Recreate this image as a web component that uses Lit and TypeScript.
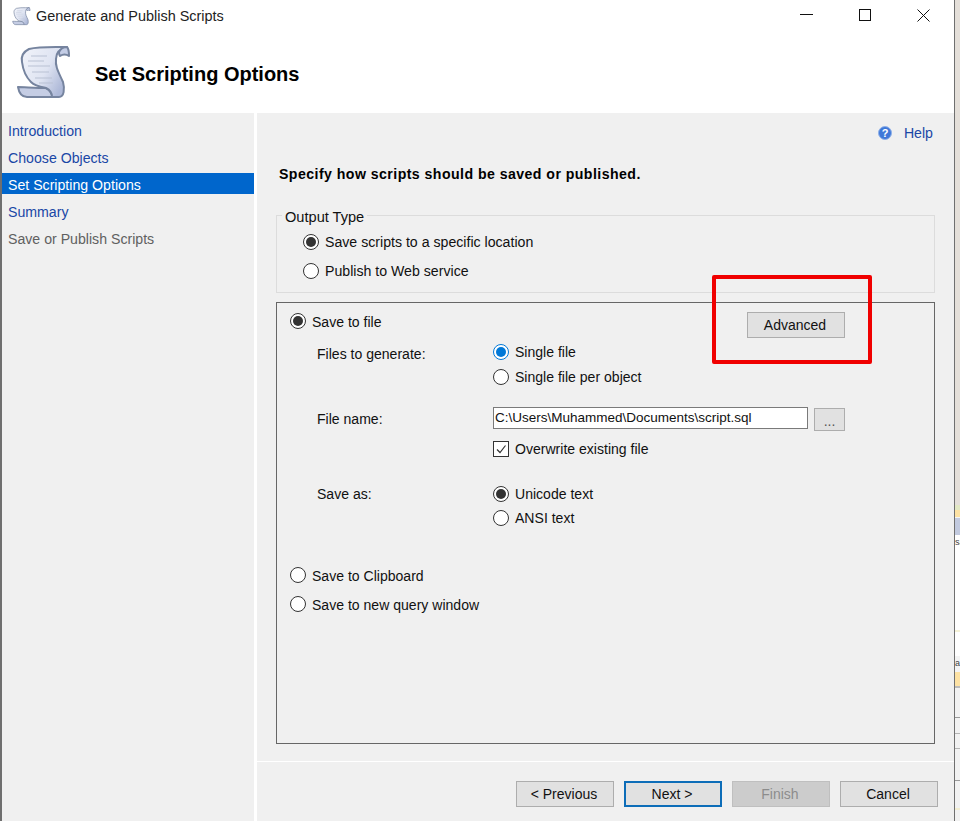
import { LitElement, css, html, svg } from "lit";
import { customElement } from "lit/decorators.js";

// background behind the dialog, top to bottom: height, colour, clipped text
const backdrop: [number, string, string?][] = [
  [505, "#e4dfd9"],
  [5, "#e2e8c4"],
  [7, "#fde2a4"],
  [1, "#f4f4f4"],
  [17, "#c2cadf"],
  [95, "#ffffff", "sa"],
  [2, "#f5f2d8"],
  [24, "#ffffff"],
  [16, "#f4f4f4", "a"],
  [14, "#fde2a4"],
  [2, "#bcbcbc"],
  [29, "#f2f2f2"],
  [1, "#9a9a9a"],
  [15, "#f2f2f2"],
  [1, "#b5b5b5"],
  [14, "#f2f2f2"],
  [1, "#b5b5b5"],
  [31, "#f2f2f2"],
  [1, "#9a9a9a"],
  [27, "#f2f2f2"],
  [2, "#f2eed2"],
  [11, "#f2f2f2"],
];

const scroll = (size: number) => html`
  <svg width=${size} height=${size} viewBox="0 0 54 56" aria-hidden="true">
    <defs>
      <linearGradient id="paper" x1="0" y1="0" x2="1" y2="0.6">
        <stop offset="0" stop-color="#f2f4fa"></stop>
        <stop offset="0.6" stop-color="#dfe4f2"></stop>
        <stop offset="1" stop-color="#aeb9d8"></stop>
      </linearGradient>
    </defs>
    ${svg`
      <path d="M1 42 C6 42 20 43 29 43 C33 45 35 48 35 52 L10 52 C5 52 2 48 1 42Z" fill="#c5cde4" stroke="#76849f" stroke-width="2" stroke-linejoin="round"/>
      <path d="M12 4 C6 7 4 12 5 17 C6 25 9 32 14 37 C18 41 24 42 29 43 C33 45 35 48 35 52 L42 52 C47 52 48 44 46 37 C42 28 38 22 39 14 C39 8 42 4 50 2 L39 2 C30 2 20 2 12 4Z" fill="url(#paper)" stroke="#76849f" stroke-width="2" stroke-linejoin="round"/>
      <path d="M42 7 C44 3 48 2 50 2 C52 4 52 8 52 11 C49 9 46 9 43 11 C42 10 42 8 42 7Z" fill="#c4cde6" stroke="#76849f" stroke-width="2" stroke-linejoin="round"/>
      <path d="M14 11H30M11 16H27M11 21H33M15 27H32M18 33H35M22 38H36" stroke="#b9c1d4" stroke-width="1.2" fill="none"/>
    `}
  </svg>
`;

const radio = (label: string, kind = "") => html`
  <div class="choice">
    <span class="radio ${kind}"></span><span>${label}</span>
  </div>
`;

@customElement("app-root")
export class AppRoot extends LitElement {
  static styles = css`
    :host {
      display: flex;
      width: 960px;
      height: 821px;
      overflow: hidden;
      font-family: "Liberation Sans", Arial, sans-serif;
      font-size: 14.15px;
      color: #111;
      background: #fff;
    }

    .window {
      width: 952px;
      height: 821px;
      flex: none;
      display: flex;
      flex-direction: column;
      border-left: 2px solid #6f6f6f;
      border-right: 1px solid #6f6f6f;
      background: #fff;
    }

    .strip {
      flex: 1;
      min-width: 0;
      overflow: hidden;
    }

    .strip div {
      font-size: 9px;
      line-height: 14px;
      color: #444;
      white-space: nowrap;
    }

    .head {
      height: 113px;
      flex: none;
      display: flex;
      flex-direction: column;
    }

    .titlebar {
      height: 32px;
      display: flex;
      align-items: center;
      font-size: 14.45px;
      color: #222;
      padding-left: 10px;
    }

    .titlebar .small {
      width: 19px;
      height: 19px;
      margin-right: 5px;
    }

    .controls {
      margin-left: auto;
      display: flex;
      gap: 46px;
      align-items: center;
      padding: 0 24px 2px 0;
    }

    .controls svg {
      display: block;
    }

    .banner {
      display: flex;
      align-items: center;
      padding-left: 14px;
      height: 56px;
      margin-top: 13px;
    }

    .banner h1 {
      margin: 2px 0 0 23px;
      font-size: 20px;
      font-weight: 700;
      color: #000;
    }

    .body {
      flex: 1;
      display: flex;
      min-height: 0;
    }

    nav {
      width: 252px;
      flex: none;
      background: #f0f0f0;
      padding-top: 6px;
      margin-right: 3px;
    }

    nav div {
      height: 21px;
      line-height: 24px;
      margin-bottom: 6px;
      padding-left: 6px;
      color: #1a47a6;
    }

    nav .current {
      background: #0066cc;
      color: #fff;
    }

    nav .off {
      color: #606060;
    }

    .side {
      flex: 1;
      display: flex;
      flex-direction: column;
      min-width: 0;
    }

    main {
      height: 648px;
      flex: none;
      background: #f0f0f0;
      padding: 10px 19px 0;
      box-sizing: border-box;
    }

    .help {
      height: 20px;
      display: flex;
      justify-content: flex-end;
      align-items: center;
      color: #1a47a6;
      padding-right: 2px;
    }

    .help svg {
      margin-right: 12px;
    }

    h2 {
      margin: 21px 0 0 3px;
      height: 20px;
      line-height: 20px;
      font-size: 14.15px;
      font-weight: 700;
      letter-spacing: 0.44px;
      white-space: nowrap;
      color: #000;
    }

    .group {
      position: relative;
      margin-top: 31px;
      height: 78px;
      box-sizing: border-box;
      border: 1px solid #dcdcdc;
      padding: 17px 0 0 26px;
    }

    .legend {
      position: absolute;
      left: 5px;
      top: -7px;
      padding: 0 3px;
      font-size: 14.6px;
      line-height: 16px;
      background: #f0f0f0;
    }

    .group .choice + .choice {
      margin-top: 11px;
    }

    .box {
      margin-top: 9px;
      height: 442px;
      box-sizing: border-box;
      border: 1px solid #666;
      padding: 9px 89px 0 13px;
      font-size: 14.05px;
    }

    .top {
      display: flex;
      justify-content: space-between;
      align-items: flex-start;
    }

    .top .choice span:last-child,
    .others .choice span:last-child {
      padding-top: 2px;
    }

    .form {
      margin: 5px 0 0 27px;
      display: grid;
      grid-template-columns: 176px 1fr;
    }

    .stack {
      display: flex;
      flex-direction: column;
      gap: 7px;
    }

    .stack.tight {
      gap: 6px;
    }

    .label {
      line-height: 22px;
    }

    .name {
      margin-top: 21px;
    }

    .label.name {
      line-height: 24px;
    }

    .label.save {
      line-height: 18px;
    }

    .path {
      display: flex;
      gap: 6px;
      align-items: flex-start;
    }

    .field {
      width: 315px;
      height: 22px;
      box-sizing: border-box;
      border: 1px solid #7a7a7a;
      background: #fff;
      padding-left: 1px;
      font-size: 13.5px;
      line-height: 20px;
      white-space: nowrap;
      overflow: hidden;
    }

    .more {
      width: 31px;
      height: 23px;
      margin-top: 1px;
      box-sizing: border-box;
      border: 1px solid #adadad;
      background: #e1e1e1;
      color: #555;
      text-align: center;
      line-height: 24px;
    }

    .check {
      margin-top: 9px;
      height: 18px;
      display: flex;
      align-items: center;
      gap: 6px;
    }

    .tick {
      width: 16px;
      height: 16px;
      box-sizing: border-box;
      border: 1px solid #333;
      background: #fff;
    }

    .tick svg {
      display: block;
    }

    .save {
      margin-top: 27px;
    }

    .others {
      margin: 39px 0 0;
      display: flex;
      flex-direction: column;
      gap: 11px;
    }

    .choice {
      height: 18px;
      display: flex;
      align-items: center;
      gap: 6px;
      white-space: nowrap;
    }

    .radio {
      width: 16px;
      height: 16px;
      flex: none;
      box-sizing: border-box;
      border: 1px solid #333;
      border-radius: 50%;
      background: #fff;
      display: flex;
      align-items: center;
      justify-content: center;
    }

    .radio.on::after,
    .radio.blue::after {
      content: "";
      width: 10px;
      height: 10px;
      border-radius: 50%;
      background: #333;
    }

    .radio.blue {
      border-color: #0078d7;
    }

    .radio.blue::after {
      background: #0078d7;
    }

    footer {
      flex: 1;
      border-top: 1px solid #fff;
      background: #f0f0f0;
      display: flex;
      justify-content: flex-end;
      gap: 10px;
      padding: 19px 16px 0 0;
    }

    button {
      width: 98px;
      height: 26px;
      box-sizing: border-box;
      padding: 0 2px 0 0;
      border: 1px solid #adadad;
      background: #e1e1e1;
      font: inherit;
      font-size: 14px;
      color: #111;
    }

    button.default {
      border: 2px solid #0d6db8;
    }

    button:disabled {
      background: #cccccc;
      border-color: #bfbfbf;
      color: #8c8c8c;
    }

    .mark {
      position: absolute;
      left: 712px;
      top: 275px;
      width: 160px;
      height: 89px;
      box-sizing: border-box;
      border: 4px solid #f00000;
      border-radius: 2px;
    }
  `;

  render() {
    return html`
      <div class="window">
        <div class="head">
          <div class="titlebar">
            <span class="small">${scroll(19)}</span>
            Generate and Publish Scripts
            <div class="controls">
              <svg width="13" height="2"><rect width="13" height="1" y="0" fill="#111"></rect></svg>
              <svg width="12" height="12"><rect x="0.5" y="0.5" width="11" height="11" fill="none" stroke="#111"></rect></svg>
              <svg width="13" height="13"><path d="M0.5 0.5L12.5 12.5M12.5 0.5L0.5 12.5" stroke="#111" fill="none"></path></svg>
            </div>
          </div>
          <div class="banner">
            ${scroll(56)}
            <h1>Set Scripting Options</h1>
          </div>
        </div>
        <div class="body">
          <nav>
            <div>Introduction</div>
            <div>Choose Objects</div>
            <div class="current">Set Scripting Options</div>
            <div>Summary</div>
            <div class="off">Save or Publish Scripts</div>
          </nav>
          <div class="side">
            <main>
              <div class="help">
                <svg width="14" height="14" viewBox="0 0 14 14">
                  <circle cx="7" cy="7" r="6.5" fill="#3f78d8" stroke="#8fb0e8"></circle>
                  <text x="7" y="11" text-anchor="middle" font-size="11" font-weight="700" fill="#fff">?</text>
                </svg>
                Help
              </div>
              <h2>Specify how scripts should be saved or published.</h2>
              <div class="group">
                <span class="legend">Output Type</span>
                ${radio("Save scripts to a specific location", "on")}
                ${radio("Publish to Web service")}
              </div>
              <div class="box">
                <div class="top">
                  ${radio("Save to file", "on")}
                  <button>Advanced</button>
                </div>
                <div class="form">
                  <div class="label">Files to generate:</div>
                  <div class="stack">
                    ${radio("Single file", "blue")}
                    ${radio("Single file per object")}
                  </div>
                  <div class="label name">File name:</div>
                  <div class="name">
                    <div class="path">
                      <div class="field">C:\\Users\\Muhammed\\Documents\\script.sql</div>
                      <div class="more">...</div>
                    </div>
                    <div class="check">
                      <span class="tick">
                        <svg width="14" height="14" viewBox="0 0 14 14"><path d="M3 7.5L6 10.5L11.5 3.5" fill="none" stroke="#333" stroke-width="1.2"></path></svg>
                      </span>
                      <span>Overwrite existing file</span>
                    </div>
                  </div>
                  <div class="label save">Save as:</div>
                  <div class="stack tight save">
                    ${radio("Unicode text", "on")}
                    ${radio("ANSI text")}
                  </div>
                </div>
                <div class="others">
                  ${radio("Save to Clipboard")}
                  ${radio("Save to new query window")}
                </div>
              </div>
            </main>
            <footer>
              <button>&lt; Previous</button>
              <button class="default">Next &gt;</button>
              <button disabled>Finish</button>
              <button>Cancel</button>
            </footer>
          </div>
        </div>
      </div>
      <div class="strip">
        ${backdrop.map(
          ([h, bg, text]) =>
            html`<div style="height:${h}px;background:${bg}">${text ?? ""}</div>`,
        )}
      </div>
      <div class="mark"></div>
    `;
  }
}
